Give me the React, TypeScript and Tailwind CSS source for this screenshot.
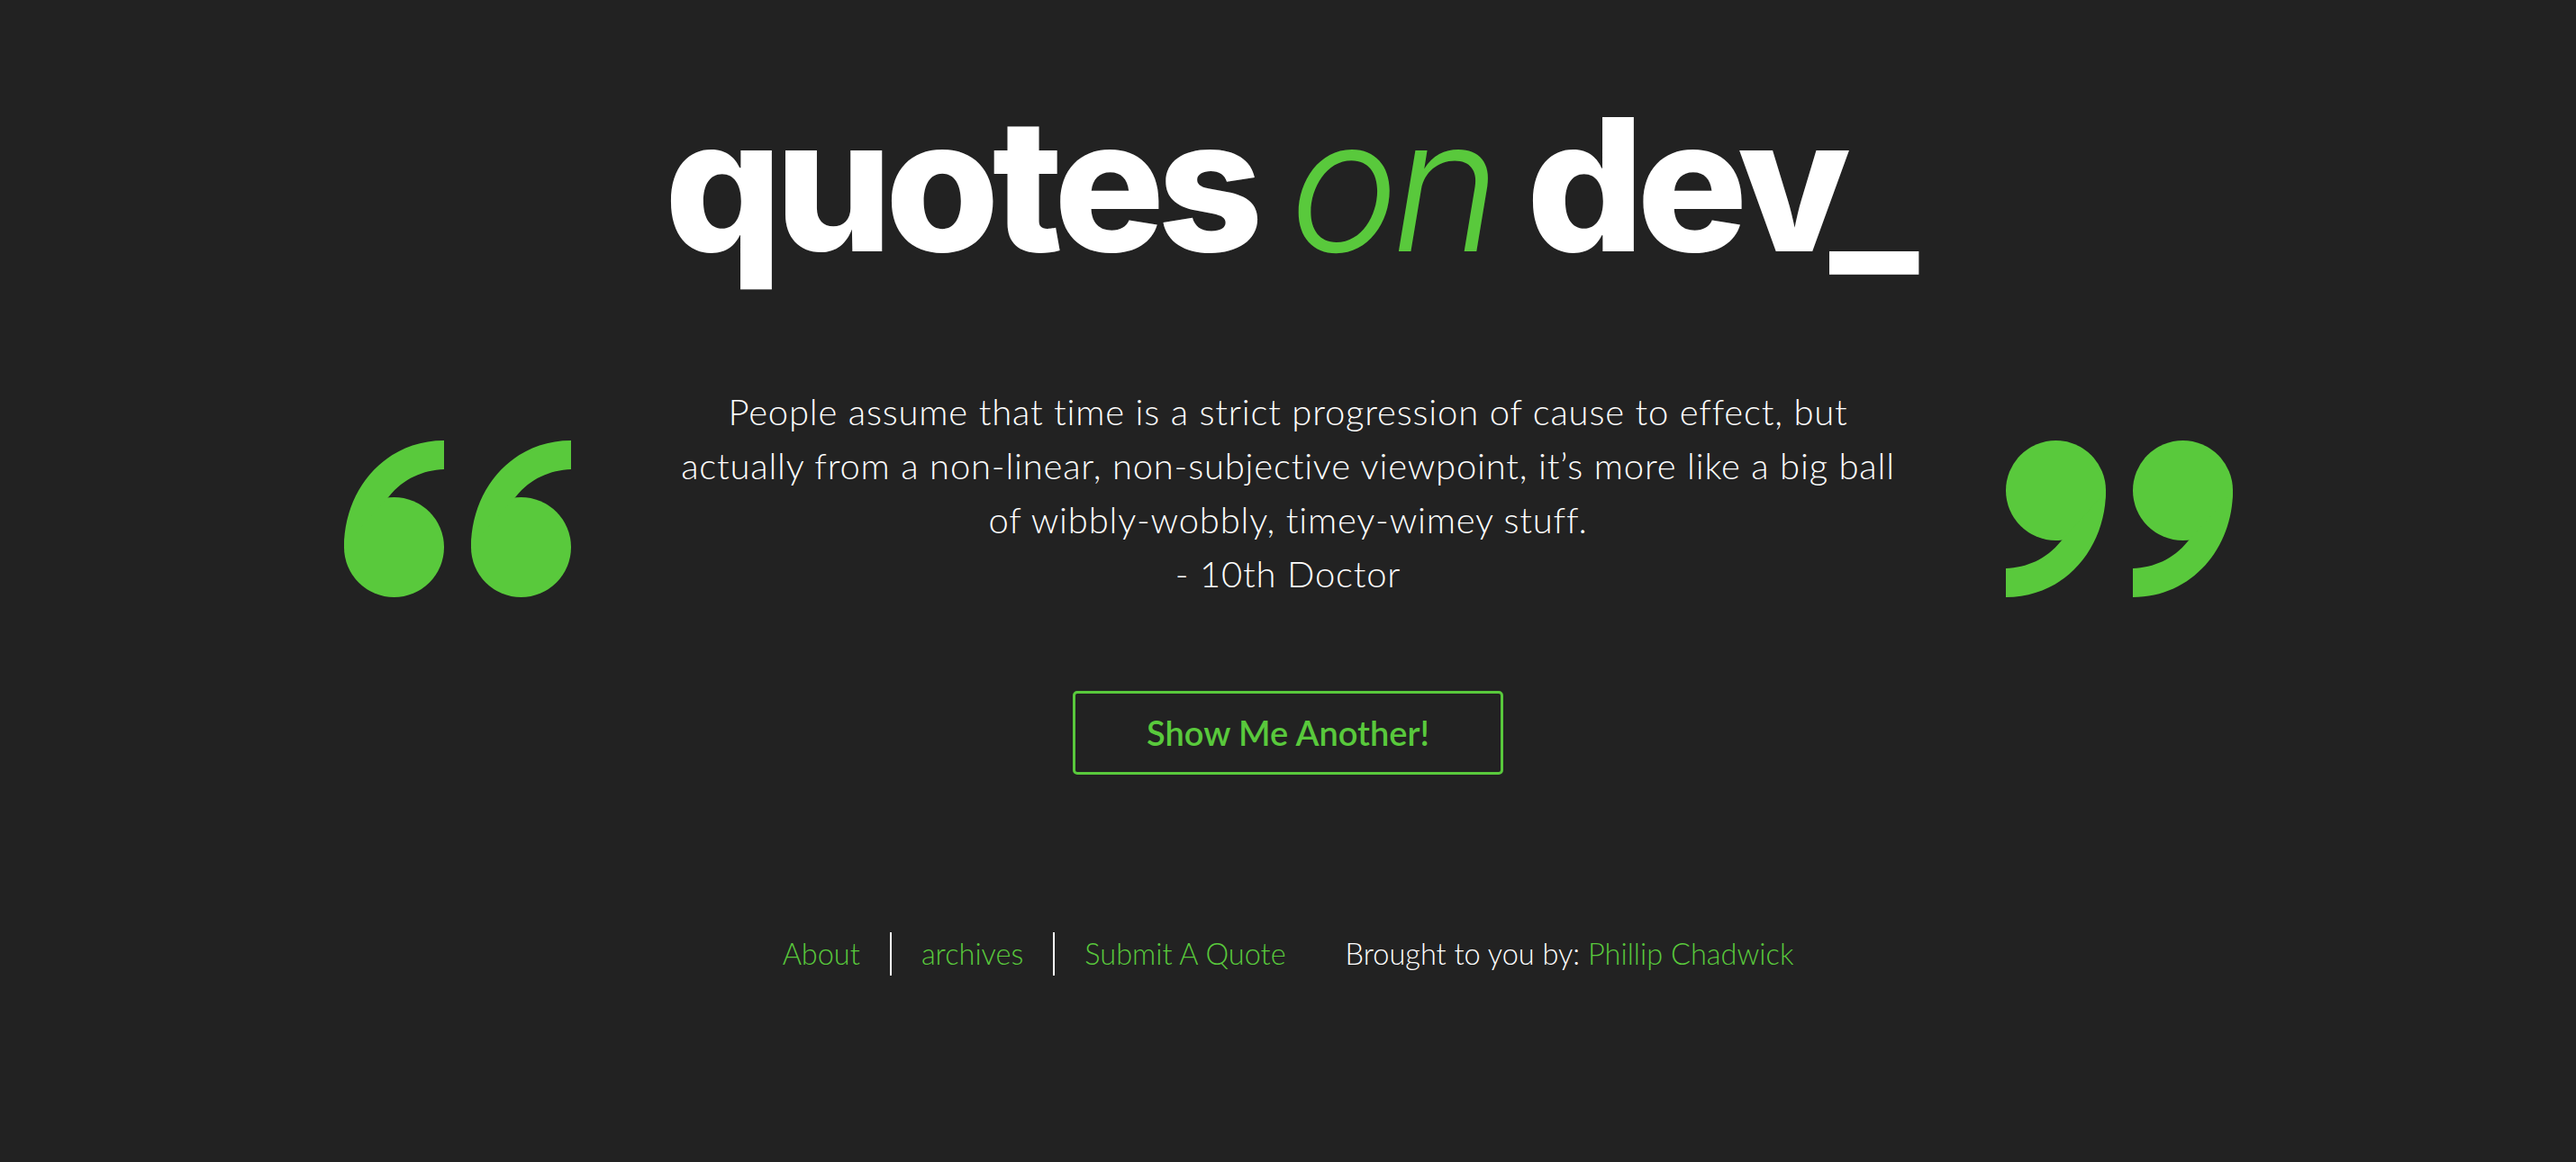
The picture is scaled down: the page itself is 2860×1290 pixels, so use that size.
const GREEN = "#59c93c";

const Glyph = ({ flip }: { flip?: boolean }) => (
  <svg width="111" height="174" viewBox="0 0 111 174">
    <g fill={GREEN} transform={flip ? "rotate(180 55.5 87)" : undefined}>
      <circle cx="55.5" cy="118.5" r="55.5" />
      <path d="M111 0 L111 32 C88 33 66 42 50 62 L20 95 L0 118 C0 55 45 0 111 0 Z" />
    </g>
  </svg>
);

const QuoteMark = ({ flip }: { flip?: boolean }) => (
  <div className="flex gap-[30px] mt-[62px] shrink-0">
    <Glyph flip={flip} />
    <Glyph flip={flip} />
  </div>
);

const Divider = () => <span className="block w-[2px] h-[48px] bg-white mx-[33px]" />;

export default function App() {
  return (
    <div
      className="min-h-screen w-full bg-[#222222] flex flex-col items-center text-white"
      style={{ fontFamily: "Lato, 'Open Sans', sans-serif" }}
    >
      <h1
        className="mt-[102px] text-[205px] leading-none font-extrabold tracking-[-8px] whitespace-nowrap"
        style={{ fontFamily: "Inter, Roboto, sans-serif" }}
      >
        quotes{" "}
        <span className="italic font-light text-[#59c93c]">on</span>{" "}
        dev_
      </h1>

      <div className="flex items-start gap-[109px] mt-[120px]">
        <QuoteMark />
        <div className="w-[1375px] text-center text-[40px] leading-[60px] font-light tracking-[0.8px] text-white">
          <p>
            People assume that time is a strict progression of cause to effect, but actually from a
            non-linear, non-subjective viewpoint, it’s more like a big ball of wibbly-wobbly,
            timey-wimey stuff.
          </p>
          <p>- 10th Doctor</p>
        </div>
        <QuoteMark flip />
      </div>

      <button className="mt-[100px] w-[478px] h-[93px] border-[3px] border-[#59c93c] rounded-[5px] text-[#59c93c] text-[38px] font-semibold">
        Show Me Another!
      </button>

      <div className="mt-[175px] flex items-center h-[48px] text-[32.5px] font-light">
        <a className="text-[#59c93c]">About</a>
        <Divider />
        <a className="text-[#59c93c]">archives</a>
        <Divider />
        <a className="text-[#59c93c]">Submit A Quote</a>
        <span className="ml-[66px]">
          Brought to you by: <a className="text-[#59c93c]">Phillip Chadwick</a>
        </span>
      </div>
    </div>
  );
}
